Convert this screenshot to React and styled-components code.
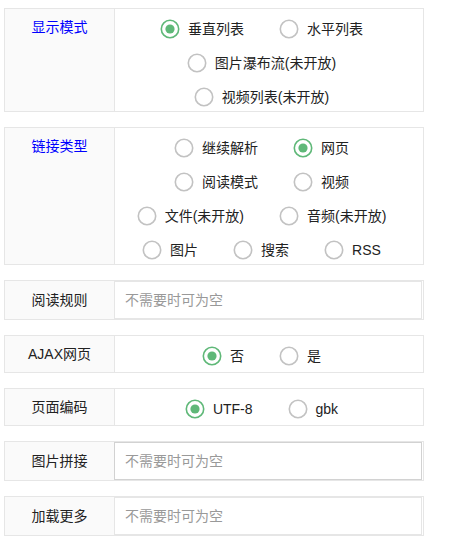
import React from "react";
import styled, { createGlobalStyle } from "styled-components";

const Global = createGlobalStyle`
  html, body { margin: 0; padding: 0; background: #fff; }
  body { font-family: "Liberation Sans", "Noto Sans CJK SC", sans-serif; font-size: 14px; color: #222; }
  * { box-sizing: border-box; }
`;

const Form = styled.form`
  width: 428px;
  padding: 8px 0 0 4px;
  display: flex;
  flex-direction: column;
  gap: 15px;
`;

const Item = styled.div`
  display: flex;
  width: 420px;
  border: 1px solid #e6e6e6;
  background: #fff;
`;

const Label = styled.div`
  width: 110px;
  flex: none;
  background: #fafafa;
  border-right: 1px solid #e6e6e6;
  padding: 8px 10px;
  min-height: 36px;
  line-height: 20px;
  display: flex;
  justify-content: center;
  align-items: ${(p) => (p.$top ? "flex-start" : "center")};
  color: ${(p) => (p.$accent ? "#0000ff" : "#222")};
  position: relative;
  z-index: 0;
`;

const Group = styled.div`
  flex: 1;
  display: flex;
  flex-wrap: wrap;
  justify-content: center;
  align-content: flex-start;
  column-gap: 26px;
  padding: 0 13px 0 7px;
`;

const RadioItem = styled.label`
  display: inline-flex;
  align-items: center;
  height: 28px;
  margin-top: 6px;
  padding-right: 9px;
  line-height: 28px;
  white-space: nowrap;
  color: #222;
  cursor: pointer;
`;

const Dot = styled.svg`
  width: 20px;
  height: 20px;
  flex: none;
  margin-right: 8px;
`;

const Input = styled.input`
  flex: 1;
  min-width: 0;
  height: 38px;
  margin: 0 1px 0 -1px;
  padding: 0 10px;
  border: 1px solid ${(p) => (p.$hover ? "#d2d2d2" : "#e6e6e6")};
  outline: none;
  font: inherit;
  font-size: 14px;
  color: #222;
  background: #fff;
  position: relative;
  z-index: 1;
  &::placeholder { color: #999; }
`;

function Radio({ label, checked }) {
  const c = checked ? "#5FB878" : "#c2c2c2";
  return (
    <RadioItem>
      <Dot viewBox="0 0 20 20">
        <circle cx="10" cy="10" r="8.7" fill="none" stroke={c} strokeWidth="1.6" />
        {checked && <circle cx="10" cy="10" r="4.6" fill={c} />}
      </Dot>
      {label}
    </RadioItem>
  );
}

function RadioField({ label, options, checked, accent }) {
  return (
    <Item>
      <Label $top={accent} $accent={accent}>{label}</Label>
      <Group>
        {options.map((o) => (
          <Radio key={o} label={o} checked={o === checked} />
        ))}
      </Group>
    </Item>
  );
}

function InputField({ label, hover }) {
  return (
    <Item>
      <Label>{label}</Label>
      <Input $hover={hover} placeholder="不需要时可为空" />
    </Item>
  );
}

export default function App() {
  return (
    <>
      <Global />
      <Form>
        <RadioField
          accent
          label="显示模式"
          checked="垂直列表"
          options={["垂直列表", "水平列表", "图片瀑布流(未开放)", "视频列表(未开放)"]}
        />
        <RadioField
          accent
          label="链接类型"
          checked="网页"
          options={["继续解析", "网页", "阅读模式", "视频", "文件(未开放)", "音频(未开放)", "图片", "搜索", "RSS"]}
        />
        <InputField label="阅读规则" />
        <RadioField label="AJAX网页" checked="否" options={["否", "是"]} />
        <RadioField label="页面编码" checked="UTF-8" options={["UTF-8", "gbk"]} />
        <InputField label="图片拼接" hover />
        <InputField label="加载更多" />
      </Form>
    </>
  );
}
